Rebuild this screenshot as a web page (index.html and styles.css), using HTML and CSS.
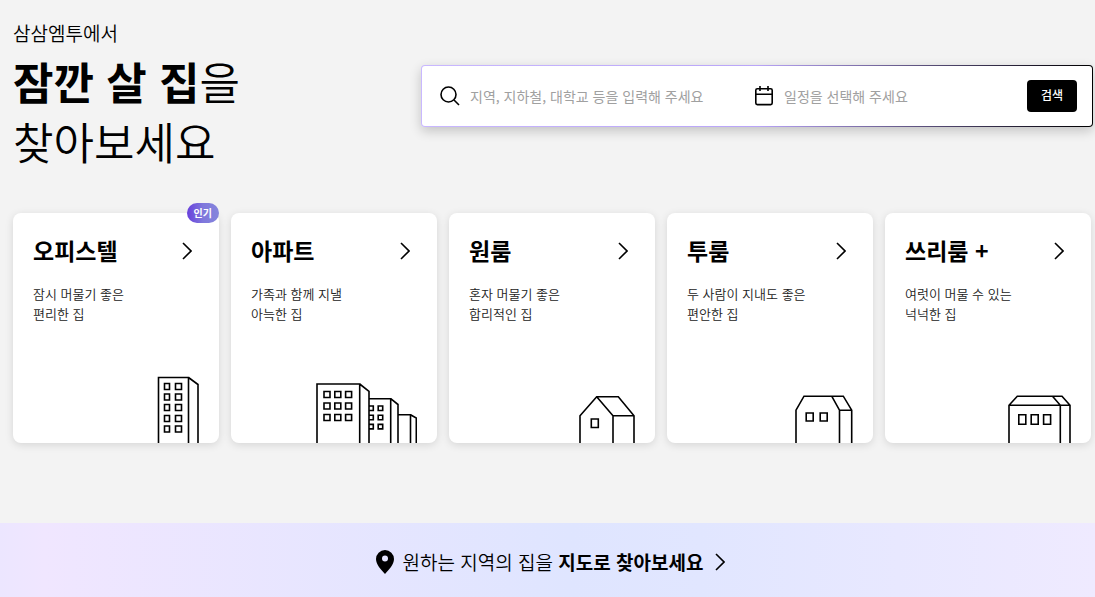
FILE: index.html
```html
<!DOCTYPE html>
<html lang="ko">
<head>
<meta charset="utf-8">
<meta name="viewport" content="width=device-width, initial-scale=1">
<title>삼삼엠투</title>
<link rel="stylesheet" href="styles.css">
</head>
<body>
<main class="page">
  <section class="hero">
    <div class="intro">
      <p class="eyebrow">삼삼엠투에서</p>
      <h1 class="headline"><strong>잠깐 살 집</strong>을<br>찾아보세요</h1>
    </div>
    <form class="search" role="search">
      <label class="field field-place">
        <svg class="icon" viewBox="0 0 20 20" aria-hidden="true"><circle cx="8.5" cy="8.5" r="7.5"/><path d="M14 14l5 5"/></svg>
        <input class="input" type="text" aria-label="지역" placeholder="지역, 지하철, 대학교 등을 입력해 주세요">
      </label>
      <label class="field field-date">
        <svg class="icon" viewBox="0 0 20 20" aria-hidden="true"><rect x="1.8" y="2.8" width="16.4" height="15.8" rx="1.5"/><path d="M2 8.3h16M6 0v5M14 0v5"/></svg>
        <input class="input" type="text" aria-label="일정" placeholder="일정을 선택해 주세요">
      </label>
      <button class="submit" type="submit">검색</button>
    </form>
  </section>

  <nav class="cards" aria-label="집 종류">
    <a class="card" href="#officetel">
      <span class="badge">인기</span>
      <span class="card-head"><span class="card-title">오피스텔</span><svg class="chevron" viewBox="0 0 10 18" aria-hidden="true"><path d="M1 1l8 8-8 8"/></svg></span>
      <span class="card-text">잠시 머물기 좋은<br>편리한 집</span>
      <svg class="house" width="42" height="67" viewBox="0 0 42 67" aria-hidden="true">
        <path d="M1.5 67V1.5H31.5V67M31.5 1.5L41 8.5V67"/>
        <path d="M7.5 7.5h5v6h-5zM18.5 7.5h6v6h-6zM7.5 18h5v6h-5zM18.5 18h6v6h-6zM7.5 28.5h5v6h-5zM18.5 28.5h6v6h-6zM7.5 39.5h5v6h-5zM18.5 39.5h6v6h-6zM7.5 50h5v6h-5zM18.5 50h6v6h-6z"/>
      </svg>
    </a>
    <a class="card" href="#apartment">
      <span class="card-head"><span class="card-title">아파트</span><svg class="chevron" viewBox="0 0 10 18" aria-hidden="true"><path d="M1 1l8 8-8 8"/></svg></span>
      <span class="card-text">가족과 함께 지낼<br>아늑한 집</span>
      <svg class="house" width="101" height="60" viewBox="0 0 101 60" aria-hidden="true">
        <path d="M1 60V1H43.7V60M43.7 1L53 8.3V60M53 15.7H74.7V60M74.7 15.7L82 21.5V60M82 31.7H94.5V60M94.5 31.7L100.3 35V60"/>
        <path d="M8 8.5h6v6H8zM18.8 8.5h6v6h-6zM29.6 8.5h6v6h-6zM8 20h6v6H8zM18.8 20h6v6h-6zM29.6 20h6v6h-6zM8 31.5h6v6H8zM18.8 31.5h6v6h-6zM29.6 31.5h6v6h-6z"/>
        <path d="M53 23h4.3v4.5H53M53 32.2h4.3v4.5H53M53 41.4h4.3v4.5H53M62.2 23h4.5v4.5h-4.5zM62.2 32.2h4.5v4.5h-4.5zM62.2 41.4h4.5v4.5h-4.5z"/>
      </svg>
    </a>
    <a class="card" href="#one-room">
      <span class="card-head"><span class="card-title">원룸</span><svg class="chevron" viewBox="0 0 10 18" aria-hidden="true"><path d="M1 1l8 8-8 8"/></svg></span>
      <span class="card-text">혼자 머물기 좋은<br>합리적인 집</span>
      <svg class="house" width="56" height="48" viewBox="0 0 56 48" aria-hidden="true">
        <path d="M1 48V20.8L17.7 1.8H39.3L55 20.8V48M17.7 1.8L34 20.8V48M34 20.8H55M12.3 24h7v8.5h-7z"/>
      </svg>
    </a>
    <a class="card" href="#two-room">
      <span class="card-head"><span class="card-title">투룸</span><svg class="chevron" viewBox="0 0 10 18" aria-hidden="true"><path d="M1 1l8 8-8 8"/></svg></span>
      <span class="card-text">두 사람이 지내도 좋은<br>편안한 집</span>
      <svg class="house" width="58" height="48" viewBox="0 0 58 48" aria-hidden="true">
        <path d="M1 48V15.2L9 1.2H48.3L56.7 15.2V48M36.7 1.2L44.5 15.2V48M44.5 15.2H56.7M11.2 18h7v8h-7zM25.2 18h7v8h-7z"/>
      </svg>
    </a>
    <a class="card" href="#three-room">
      <span class="card-head"><span class="card-title">쓰리룸 +</span><svg class="chevron" viewBox="0 0 10 18" aria-hidden="true"><path d="M1 1l8 8-8 8"/></svg></span>
      <span class="card-text">여럿이 머물 수 있는<br>넉넉한 집</span>
      <svg class="house" width="63" height="48" viewBox="0 0 63 48" aria-hidden="true">
        <path d="M1 48V10.3L9.3 1.2H54L62 10.3V48M44.5 1.2L52.3 10.3V48M1 10.3H62M10.8 19.8h7v9.5h-7zM23.2 19.8h7v9.5h-7zM35.6 19.8h7v9.5h-7z"/>
      </svg>
    </a>
  </nav>

  <a class="map-link" href="#map">
    <svg class="pin" viewBox="0 0 18 24" aria-hidden="true"><path fill-rule="evenodd" d="M9 0a9 9 0 0 0-9 9c0 5.500 5 10.500 9 15 4-4.500 9-9.500 9-15a9 9 0 0 0-9-9zm0 5.500a3 3 0 1 1 0 6 3 3 0 0 1 0-6z"/></svg>
    <span class="map-text">원하는 지역의 집을 <strong>지도로 찾아보세요</strong></span>
    <svg class="chevron" viewBox="0 0 10 18" aria-hidden="true"><path d="M1 1l8 8-8 8"/></svg>
  </a>
</main>
</body>
</html>
```
FILE: styles.css
```css
* {
  box-sizing: border-box;
}

body {
  margin: 0;
  background: #f3f3f3;
  color: #000;
  font-family: "Noto Sans CJK KR", sans-serif;
}

a {
  color: inherit;
  text-decoration: none;
}

svg {
  flex: none;
  fill: none;
  stroke: #000;
}

.page {
  display: flex;
  flex-direction: column;
  min-height: 100vh;
}

.hero {
  display: flex;
  align-items: center;
  justify-content: space-between;
  gap: 24px;
  padding: 20px 2px 0 13px;
}

.eyebrow {
  margin: 0;
  font-size: 19px;
  line-height: 26px;
  font-weight: 350;
}

.headline {
  margin: 5px 0 1px;
  font-size: 44px;
  line-height: 60px;
  font-weight: 350;
  white-space: nowrap;
}

.headline strong {
  font-weight: 700;
}

.search {
  display: flex;
  align-items: center;
  flex: 0 1 672px;
  min-width: 0;
  padding: 14px 15px 14px 18px;
  border: 1px solid transparent;
  border-radius: 4px;
  background:
    linear-gradient(#fff, #fff) padding-box,
    linear-gradient(90deg, #c9b8ff, #b9a5f8 50%, #1a1626 92%, #000) border-box;
  box-shadow: 0 4px 12px rgba(0, 0, 0, 0.2);
}

.field {
  display: flex;
  align-items: center;
  gap: 10px;
  min-width: 0;
}

.field-place {
  flex: 314 1 0;
}

.field-date {
  flex: 273 1 0;
}

.icon {
  width: 20px;
  height: 20px;
  stroke-width: 1.6;
}

.input {
  flex: 1;
  width: 100%;
  min-width: 0;
  padding: 0;
  border: 0;
  outline: 0;
  background: none;
  font: 400 14px/24px "Noto Sans CJK KR", sans-serif;
}

.input::placeholder {
  color: #a0a0a0;
  opacity: 1;
}

.submit {
  flex: none;
  width: 50px;
  height: 32px;
  padding: 0 0 2px;
  border: 0;
  border-radius: 4px;
  background: #000;
  color: #fff;
  font: 500 12px/20px "Noto Sans CJK KR", sans-serif;
}

.cards {
  display: grid;
  grid-template-columns: repeat(5, 1fr);
  gap: 12px;
  padding: 41px 4px 80px 13px;
}

.card {
  position: relative;
  display: flex;
  flex-direction: column;
  min-height: 230px;
  padding: 22px 20px 0;
  border-radius: 8px;
  background: #fff;
  box-shadow: 0 2px 8px rgba(0, 0, 0, 0.12);
}

.badge {
  position: absolute;
  top: -10px;
  right: 0;
  padding: 0 7px;
  border-radius: 10px;
  background: linear-gradient(90deg, #6840dc, #7f78dc 50%, #8585dc);
  color: #fff;
  font-size: 10px;
  line-height: 20px;
  font-weight: 700;
}

.card-head {
  display: flex;
  align-items: center;
  justify-content: space-between;
  padding-right: 7px;
}

.card-title {
  padding-bottom: 2px;
  font-size: 23px;
  line-height: 30px;
  font-weight: 600;
}

.chevron {
  width: 10px;
  height: 18px;
  stroke-width: 1.6;
}

.card-text {
  margin-top: 17px;
  color: #222;
  font-size: 13px;
  line-height: 20px;
  font-weight: 350;
}

.house {
  margin-top: auto;
  align-self: flex-end;
  stroke-width: 1.6;
}

.map-link {
  display: flex;
  flex: 1;
  align-items: center;
  justify-content: center;
  padding: 24px 0 20px 6px;
  background: linear-gradient(90deg, #ece6ff, #f0e6ff 4%, #dfe5ff 52%, #e1e6ff 64%, #efeaff);
}

.map-text {
  margin: 0 12px 0 9px;
  font-size: 19px;
  line-height: 30px;
  font-weight: 350;
}

.map-text strong {
  font-weight: 700;
}

.pin {
  width: 18px;
  height: 24px;
  fill: #000;
  stroke: none;
}
```
